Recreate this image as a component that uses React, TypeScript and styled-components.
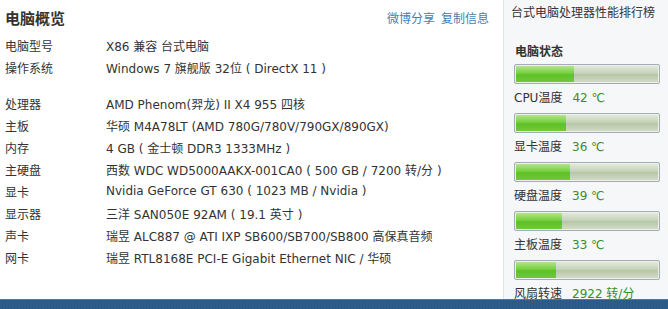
import styled, { createGlobalStyle } from "styled-components";

const GlobalStyle = createGlobalStyle`
    html, body {
        margin: 0;
        padding: 0;
        background: #ffffff;
    }
    body {
        font-family: "DejaVu Sans", "Noto Sans CJK SC", sans-serif;
        font-size: 12px;
        color: #333333;
    }
`

const specs = [
    [
        { label: "电脑型号", value: "X86 兼容 台式电脑" },
        { label: "操作系统", value: "Windows 7 旗舰版 32位 ( DirectX 11 )" },
    ],
    [
        { label: "处理器", value: "AMD Phenom(羿龙) II X4 955 四核" },
        { label: "主板", value: "华硕 M4A78LT (AMD 780G/780V/790GX/890GX)" },
        { label: "内存", value: "4 GB ( 金士顿 DDR3 1333MHz )" },
        { label: "主硬盘", value: "西数 WDC WD5000AAKX-001CA0 ( 500 GB / 7200 转/分 )" },
        { label: "显卡", value: "Nvidia GeForce GT 630 ( 1023 MB / Nvidia )" },
        { label: "显示器", value: "三洋 SAN050E 92AM ( 19.1 英寸 )" },
        { label: "声卡", value: "瑞昱 ALC887 @ ATI IXP SB600/SB700/SB800 高保真音频" },
        { label: "网卡", value: "瑞昱 RTL8168E PCI-E Gigabit Ethernet NIC / 华硕" },
    ],
]

const sensors = [
    { name: "CPU温度", value: "42 ℃", fill: 58 },
    { name: "显卡温度", value: "36 ℃", fill: 50 },
    { name: "硬盘温度", value: "39 ℃", fill: 54 },
    { name: "主板温度", value: "33 ℃", fill: 46 },
    { name: "风扇转速", value: "2922 转/分", fill: 40 },
]

const App = () => {

    return(
        <>
            <GlobalStyle />
            <Page>
                <Main>
                    <Overview>
                        <OverviewHead>
                            <Title>电脑概览</Title>
                            <Links>
                                <LinkText>微博分享</LinkText>
                                <LinkText>复制信息</LinkText>
                            </Links>
                        </OverviewHead>
                        {specs.map((group, g) => (
                            <Group key={g}>
                                {group.map((row) => (
                                    <Row key={row.label}>
                                        <Label>{row.label}</Label>
                                        <Value>{row.value}</Value>
                                    </Row>
                                ))}
                            </Group>
                        ))}
                    </Overview>
                    <Sidebar>
                        <RankLink>台式电脑处理器性能排行榜</RankLink>
                        <StatusTitle>电脑状态</StatusTitle>
                        {sensors.map((s) => (
                            <Sensor key={s.name}>
                                <Bar>
                                    <BarFill style={{ width: s.fill }} />
                                </Bar>
                                <Reading>
                                    <span>{s.name}</span>
                                    <ReadingValue>{s.value}</ReadingValue>
                                </Reading>
                            </Sensor>
                        ))}
                    </Sidebar>
                </Main>
                <Footer />
            </Page>
        </>
    )
}

export default App;

const Page = styled.div`
    width: 668px;
    height: 309px;
    display: flex;
    flex-direction: column;
    overflow: hidden;
`

    const Main = styled.div`
        flex: 1;
        display: flex;
        min-height: 0;
    `

        const Overview = styled.section`
            width: 503px;
            padding: 0 0 0 5px;
            box-sizing: border-box;
        `

            const OverviewHead = styled.div`
                height: 34px;
                display: flex;
                justify-content: space-between;
                align-items: center;
                padding-right: 14px;
            `

                const Title = styled.h2`
                    margin: 0;
                    font-family: "Noto Sans CJK SC", sans-serif;
                    font-size: 15px;
                    font-weight: 700;
                    color: #333333;
                `

                const Links = styled.div`
                    display: flex;
                    gap: 6px;
                `

                    const LinkText = styled.a`
                        color: #3f7fb5;
                        cursor: pointer;
                    `

            const Group = styled.div`
                & + & {
                    margin-top: 14px;
                }
            `

                const Row = styled.div`
                    display: grid;
                    grid-template-columns: 101px 1fr;
                    height: 22px;
                    align-items: center;
                    white-space: nowrap;
                `

                    const Label = styled.span`
                        color: #333333;
                    `

                    const Value = styled.span`
                        color: #333333;
                    `

        const Sidebar = styled.aside`
            flex: 1;
            background: #f5f7f9;
            border-left: 1px solid #dfe4ea;
            padding-left: 7px;
        `

            const RankLink = styled.div`
                height: 26px;
                line-height: 26px;
                color: #333333;
            `

            const StatusTitle = styled.div`
                margin-top: 16px;
                height: 18px;
                line-height: 18px;
                padding-left: 4px;
                font-family: "Noto Sans CJK SC", sans-serif;
                font-weight: 700;
            `

            const Sensor = styled.div`
                padding-left: 3px;
            `

                const Bar = styled.div`
                    margin-top: 4px;
                    width: 142px;
                    height: 16px;
                    border: 1px solid #a3acb6;
                    border-radius: 2px;
                    background: linear-gradient(#e6ebe0, #c3d0b4 50%, #b7c6a6 51%, #d3dcc9);
                    padding: 1px;
                    box-shadow: inset 0 0 0 1px #eef1ea;
                    overflow: hidden;
                `

                    const BarFill = styled.div`
                        height: 100%;
                        background: linear-gradient(#b2e58a, #78d040 45%, #5ec026 55%, #73c83c);
                    `

                const Reading = styled.div`
                    height: 21px;
                    line-height: 21px;
                    padding-top: 4px;
                    display: flex;
                    gap: 10px;
                `

                    const ReadingValue = styled.span`
                        color: #3a8f2a;
                    `

const Footer = styled.footer`
    height: 9px;
    background: repeating-linear-gradient(90deg, #2c5d8b 0 2px, #2a5784 2px 3px);
    border-top: 1px solid #4a7aa6;
`
